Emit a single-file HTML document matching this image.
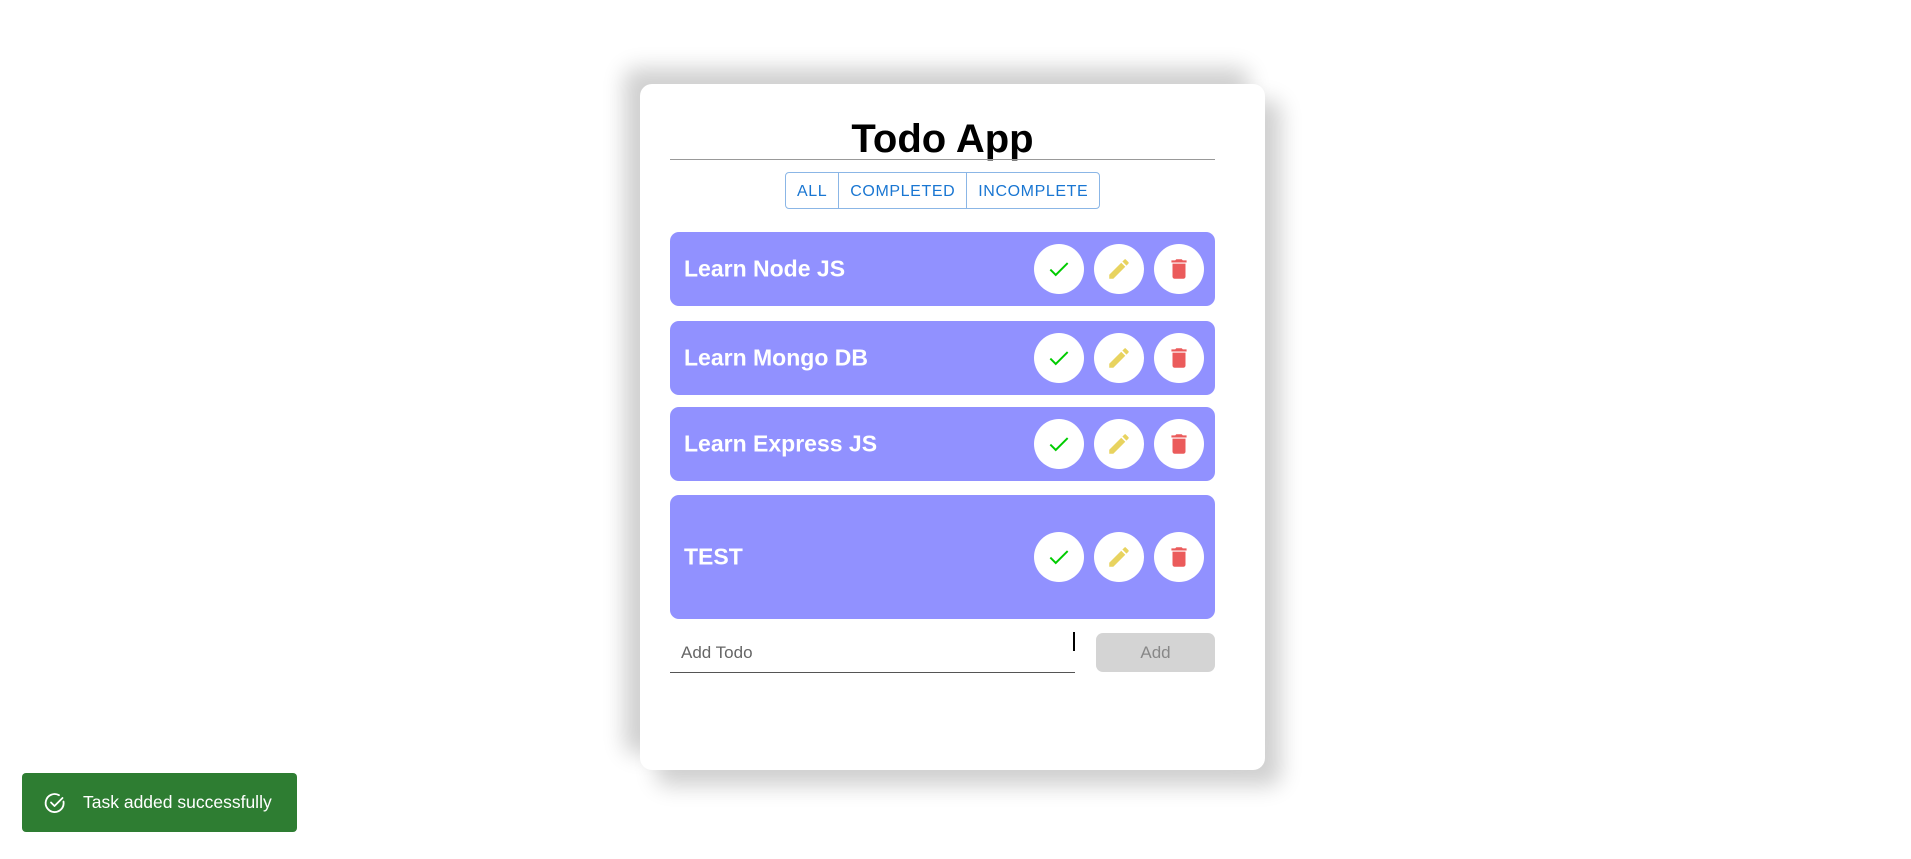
<!DOCTYPE html>
<html><head><style>
*{box-sizing:border-box;margin:0;padding:0}
body{width:1911px;height:859px;background:#fff;font-family:"Liberation Sans",Arial,sans-serif;position:relative;overflow:hidden}
.card{position:absolute;left:640px;top:84px;width:625px;height:686px;background:#fff;border-radius:12px;box-shadow:-16px -16px 22px #d0d0d0,16px 16px 22px #d0d0d0}
h1{position:absolute;left:670px;width:545px;top:116px;text-align:center;font-size:40px;font-weight:bold;color:#000;line-height:46px}
.hr{position:absolute;left:670px;width:545px;top:159px;height:1px;background:#999}
.filters{position:absolute;left:785px;top:172px;height:37px;display:flex;border:1px solid #8bb6e6;border-radius:4px;overflow:hidden}
.filters div{color:#1976d2;font-size:16px;line-height:37px;padding:0 11px;border-right:1px solid #8bb6e6;letter-spacing:.6px}
.filters div:last-child{border-right:none}
.item{position:absolute;left:670px;width:545px;background:#9191ff;border-radius:9px}
.item span{position:absolute;left:14px;top:50%;transform:translateY(-50%);color:#fff;font-weight:bold;font-size:23px}
.btn{position:absolute;top:50%;margin-top:-25px;width:50px;height:50px;border-radius:50%;background:#fff;display:flex;align-items:center;justify-content:center}
.input{position:absolute;left:670px;top:631px;width:405px;height:42px;border-bottom:1.5px solid #555}
.input span{position:absolute;left:11px;top:12px;color:#666;font-size:17px}
.cursor{position:absolute;left:1073px;top:632px;width:2px;height:19px;background:#000}
.add{position:absolute;left:1096px;top:633px;width:119px;height:39px;background:#d4d4d4;border-radius:7px;color:#888;font-size:17px;text-align:center;line-height:39px}
.toast{position:absolute;left:22px;top:773px;width:275px;height:59px;background:#2e7d32;border-radius:4px;color:#fff;font-size:17.5px;display:flex;align-items:center;padding-left:21px}
.toast svg{flex:none;margin-right:16px}
</style></head><body>
<div class="card"></div>
<h1>Todo App</h1>
<div class="hr"></div>
<div class="filters"><div>ALL</div><div>COMPLETED</div><div>INCOMPLETE</div></div>

<div class="item" style="top:232px;height:74px"><span>Learn Node JS</span>ICONS</div>
<div class="item" style="top:321px;height:74px"><span>Learn Mongo DB</span>ICONS</div>
<div class="item" style="top:407px;height:74px"><span>Learn Express JS</span>ICONS</div>
<div class="item" style="top:495px;height:124px"><span>TEST</span>ICONS</div>

<div class="input"><span>Add Todo</span></div>
<div class="cursor"></div>
<div class="add">Add</div>

<div class="toast">
<svg width="24" height="24" viewBox="0 0 24 24"><path d="M20.5 10.5A9 9 0 1 1 16 4.2" fill="none" stroke="#fff" stroke-width="1.8" stroke-linecap="round"/><path d="M8 11.5l3.5 3.5 8-8" fill="none" stroke="#fff" stroke-width="1.8" stroke-linecap="round" stroke-linejoin="round"/></svg>
<span>Task added successfully</span></div>

<script>
const icons=`<div class="btn" style="left:364px"><svg width="26" height="26" viewBox="0 0 24 24"><path d="M4 12.5l5 5L20 6.5" fill="none" stroke="#0c0" stroke-width="1.8"/></svg></div>
<div class="btn" style="left:424px"><svg width="26" height="26" viewBox="0 0 24 24"><path d="M3 17.25V21h3.75L17.81 9.94l-3.75-3.75L3 17.25zM20.71 7.04a1 1 0 0 0 0-1.41l-2.34-2.34a1 1 0 0 0-1.41 0l-1.83 1.83 3.75 3.75 1.83-1.83z" fill="#e8d35f"/></svg></div>
<div class="btn" style="left:484px"><svg width="26" height="26" viewBox="0 0 24 24"><path d="M6 19c0 1.1.9 2 2 2h8c1.1 0 2-.9 2-2V7H6v12zM19 4h-3.5l-1-1h-5l-1 1H5v2h14V4z" fill="#eb5b5b"/></svg></div>`;
document.querySelectorAll('.item').forEach(e=>{e.innerHTML=e.innerHTML.replace('ICONS',icons)});
</script>
</body></html>
